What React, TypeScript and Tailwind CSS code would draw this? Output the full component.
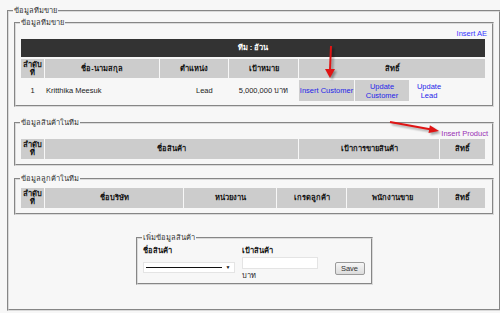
export default function App() {
  const fs = "border-2 [border-style:groove] border-[#dadada]";
  const th = "bg-[#cccccc] font-bold text-[#111] flex items-center justify-center text-center";

  return (
    <div className="relative w-[500px] h-[313px] overflow-hidden bg-[#f7f7f7] pt-[6px] font-['Liberation_Sans',Tahoma,sans-serif] text-[7.5px] leading-[10px] text-[#222]">
      <fieldset className={`ml-[7px] w-[491px] h-[305px] px-[5px] ${fs}`}>
        <legend className="-ml-[1px] px-[1px] text-[#333]">ข้อมูลทีมขาย</legend>

        {/* team */}
        <fieldset className={`mt-[2px] pl-[5px] pr-[4px] pb-[4px] ${fs}`}>
          <legend className="-ml-[1px] px-[1px] text-[#333]">ข้อมูลทีมขาย</legend>
          <div className="h-[11px] w-[466px] flex items-center justify-end">
            <a className="text-[#3535ff]">Insert AE</a>
          </div>
          <div className="grid w-[464px] grid-cols-[23px_114px_68px_69px_55px_54px_38px_1fr] gap-x-[1px] gap-y-[2px]">
            <div className="col-span-8 h-[18px] bg-[#333333] text-white font-bold flex items-center justify-center">ทีม : อ้วน</div>
            <div className={`h-[19px] leading-[8px] ${th}`}>ลำดับ<br />ที่</div>
            <div className={th}>ชื่อ-นามสกุล</div>
            <div className={th}>ตำแหน่ง</div>
            <div className={th}>เป้าหมาย</div>
            <div className={`col-span-4 ${th}`}>สิทธิ์</div>

            <div className="h-[21px] flex items-center justify-center">1</div>
            <div className="flex items-center pl-[1px]">Kritthika Meesuk</div>
            <div className="flex items-center pl-[36px]">Lead</div>
            <div className="flex items-center justify-center">5,000,000 บาท</div>
            <div className="bg-[#cecece] flex items-center justify-center text-[#2525e8]">Insert Customer</div>
            <div className="bg-[#cecece] flex items-center justify-center text-center leading-[9px] text-[#2525e8]">Update<br />Customer</div>
            <div className="flex items-center justify-center text-center leading-[9px] text-[#2525e8]">Update<br />Lead</div>
            <div />
          </div>
        </fieldset>

        {/* products */}
        <fieldset className={`mt-[11px] pl-[5px] pr-[4px] pb-[5px] ${fs}`}>
          <legend className="-ml-[1px] px-[1px] text-[#333]">ข้อมูลสินค้าในทีม</legend>
          <div className="h-[11px] w-[467px] flex items-center justify-end">
            <a className="text-[#9a2fb4]">Insert Product</a>
          </div>
          <div className="grid w-[464px] h-[20px] grid-cols-[23px_253px_140px_1fr] gap-x-[1px]">
            <div className={`leading-[8px] ${th}`}>ลำดับ<br />ที่</div>
            <div className={th}>ชื่อสินค้า</div>
            <div className={th}>เป้าการขายสินค้า</div>
            <div className={th}>สิทธิ์</div>
          </div>
        </fieldset>

        {/* customers */}
        <fieldset className={`mt-[8px] pt-[4px] pl-[5px] pr-[4px] pb-[5px] ${fs}`}>
          <legend className="-ml-[1px] px-[1px] text-[#333]">ข้อมูลลูกค้าในทีม</legend>
          <div className="grid w-[464px] h-[20px] grid-cols-[23px_138px_92px_69px_91px_1fr] gap-x-[1px]">
            <div className={`leading-[8px] ${th}`}>ลำดับ<br />ที่</div>
            <div className={th}>ชื่อบริษัท</div>
            <div className={th}>หน่วยงาน</div>
            <div className={th}>เกรดลูกค้า</div>
            <div className={th}>พนักงานขาย</div>
            <div className={th}>สิทธิ์</div>
          </div>
        </fieldset>

        {/* add product */}
        <fieldset className={`mx-auto mt-[18px] w-[237px] h-[52px] pl-[5px] ${fs}`}>
          <legend className="-ml-[1px] px-[1px] text-[#333]">เพิ่มข้อมูลสินค้า</legend>
          <div className="mt-[3px] flex">
            <div className="w-[99px]">
              <div className="h-[10px] font-bold text-[#111]">ชื่อสินค้า</div>
              <div className="mt-[6px] w-[92px] h-[11px] bg-white border border-[#e4e4e4] flex items-center pl-[2px] pr-[3px] gap-[4px]">
                <div className="flex-1 border-t border-[#111]" />
                <span className="text-[5px] leading-[5px] text-[#111]">▼</span>
              </div>
            </div>
            <div className="w-[93px]">
              <div className="h-[10px] font-bold text-[#111]">เป้าสินค้า</div>
              <div className="mt-[1px] w-[76px] h-[12px] bg-white border border-[#e4e4e4]" />
              <div className="mt-[2px]">บาท</div>
            </div>
            <button className="mt-[16px] w-[30px] h-[13px] rounded-[2px] border border-[#9a9a9a] bg-gradient-to-b from-[#f6f6f6] to-[#dcdcdc] text-[7.5px] leading-[11px] text-[#333]">
              Save
            </button>
          </div>
        </fieldset>
      </fieldset>

      {/* red arrows drawn over the page */}
      <svg className="absolute left-0 top-0 pointer-events-none" width="500" height="313">
        <defs>
          <filter id="sh" x="-50%" y="-50%" width="200%" height="200%">
            <feGaussianBlur stdDeviation="1.2" />
          </filter>
        </defs>
        <g opacity="0.35" filter="url(#sh)" transform="translate(2,2)">
          <line x1="331" y1="46" x2="330" y2="70" stroke="#000" strokeWidth="2" />
          <polygon points="325,69 335,69 330,78" fill="#000" />
          <line x1="390" y1="122" x2="430" y2="129.3" stroke="#000" strokeWidth="2" />
          <polygon points="428.5,133.1 429.9,125.3 439,131" fill="#000" />
        </g>
        <line x1="331" y1="46" x2="330" y2="70" stroke="#e01414" strokeWidth="2" />
        <polygon points="325,69 335,69 330,78" fill="#e01414" />
        <line x1="390" y1="122" x2="430" y2="129.3" stroke="#e01414" strokeWidth="2" />
        <polygon points="428.5,133.1 429.9,125.3 439,131" fill="#e01414" />
      </svg>
    </div>
  );
}
